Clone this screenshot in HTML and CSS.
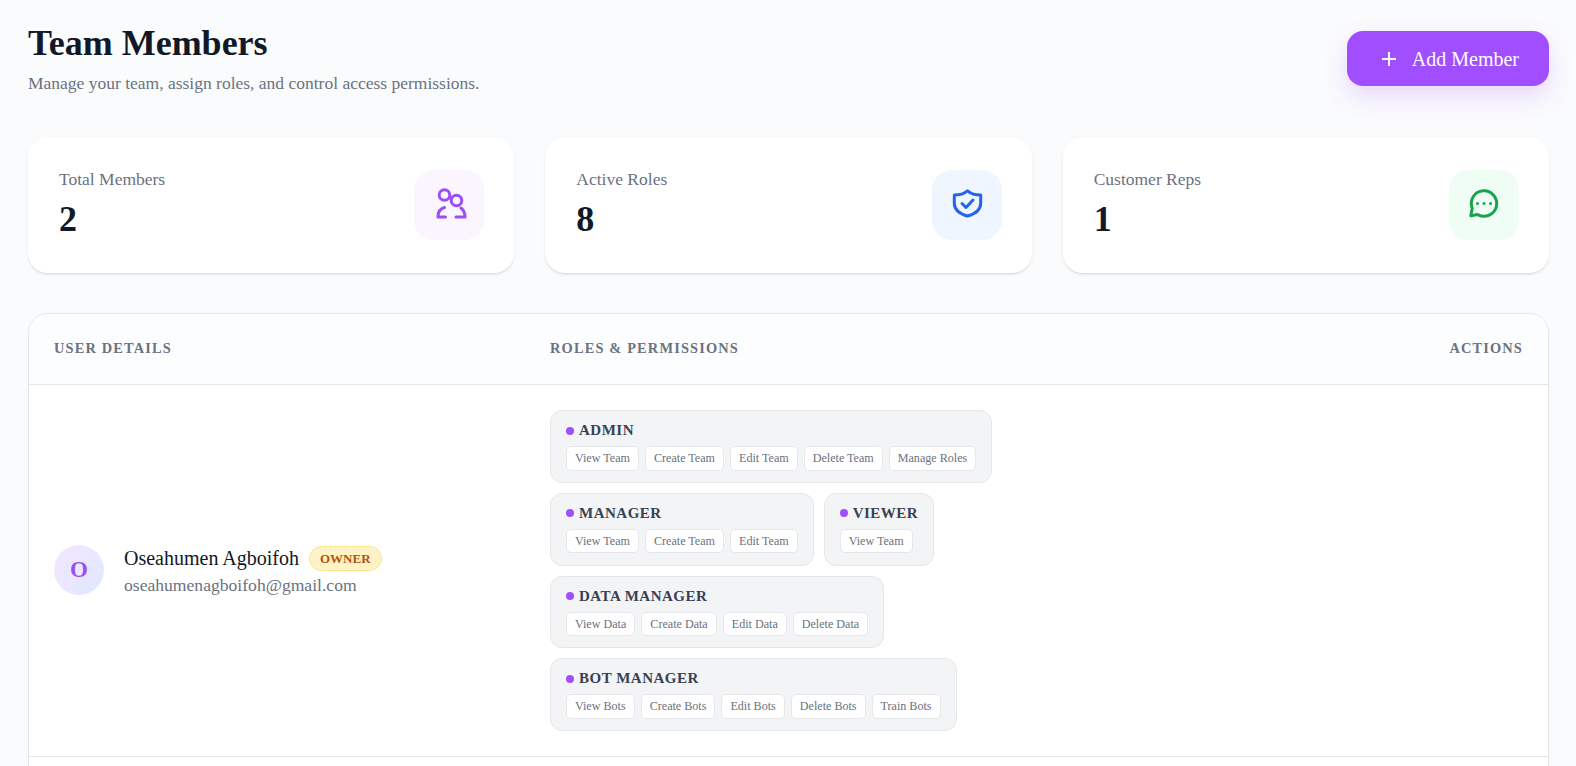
FILE: index.html
```html
<!DOCTYPE html>
<html lang="en">
<head>
<meta charset="utf-8">
<title>Team Members</title>
<link rel="stylesheet" href="styles.css">
</head>
<body>
<main class="page">
  <header class="page-head">
    <div>
      <h1 class="title">Team Members</h1>
      <p class="subtitle">Manage your team, assign roles, and control access permissions.</p>
    </div>
    <button class="add-btn" type="button">
      <svg class="add-icon" viewBox="0 0 16 16" aria-hidden="true"><path d="M8 1v14M1 8h14"/></svg>
      <span class="add-label">Add Member</span>
    </button>
  </header>

  <section class="stats">
    <article class="stat">
      <div class="stat-text">
        <div class="stat-label">Total Members</div>
        <div class="stat-value">2</div>
      </div>
      <div class="stat-icon stat-icon-purple">
        <svg class="glyph" viewBox="0 0 32 32" aria-hidden="true">
          <circle cx="11.500" cy="6" r="5.300"/>
          <circle cx="23.500" cy="11.500" r="5.300"/>
          <path d="M12.500 28H5C5 23 7.500 19.500 11.500 18.500"/>
          <path d="M23 28h9C32 24 30.500 21 28 19"/>
        </svg>
      </div>
    </article>
    <article class="stat">
      <div class="stat-text">
        <div class="stat-label">Active Roles</div>
        <div class="stat-value">8</div>
      </div>
      <div class="stat-icon stat-icon-blue">
        <svg class="glyph" viewBox="0 1 32 32" aria-hidden="true">
          <path d="M16.500 2.800C19.500 5.300 24 7 29.700 7v8c0 6.500-5.700 11-13.200 13C9 26 3.300 21.500 3.300 15V7C9 7 13.500 5.300 16.500 2.800Z"/>
          <path d="M11 15.500l4 4 7-7.500"/>
        </svg>
      </div>
    </article>
    <article class="stat">
      <div class="stat-text">
        <div class="stat-label">Customer Reps</div>
        <div class="stat-value">1</div>
      </div>
      <div class="stat-icon stat-icon-green">
        <svg class="glyph" viewBox="1 1 32 32" aria-hidden="true">
          <path d="M3.800 27.700L5.200 20.200A12.700 12.700 0 1 1 10.800 26.600Z"/>
          <path class="dots" d="M10.500 15.500h.01M17 15.500h.01M23.500 15.500h.01"/>
        </svg>
      </div>
    </article>
  </section>

  <section class="table">
    <div class="table-head">
      <div>User Details</div>
      <div>Roles &amp; Permissions</div>
      <div>Actions</div>
    </div>
    <div class="table-row">
      <div class="user">
        <div class="avatar">O</div>
        <div>
          <div class="user-line">
            <span class="user-name">Oseahumen Agboifoh</span>
            <span class="owner">Owner</span>
          </div>
          <div class="user-email">oseahumenagboifoh@gmail.com</div>
        </div>
      </div>
      <div class="roles">
        <div class="role">
          <div class="role-name">Admin</div>
          <div class="perms">
            <span class="perm">View Team</span><span class="perm">Create Team</span><span class="perm">Edit Team</span><span class="perm">Delete Team</span><span class="perm">Manage Roles</span>
          </div>
        </div>
        <div class="role">
          <div class="role-name">Manager</div>
          <div class="perms">
            <span class="perm">View Team</span><span class="perm">Create Team</span><span class="perm">Edit Team</span>
          </div>
        </div>
        <div class="role">
          <div class="role-name">Viewer</div>
          <div class="perms">
            <span class="perm">View Team</span>
          </div>
        </div>
        <div class="role">
          <div class="role-name">Data Manager</div>
          <div class="perms">
            <span class="perm">View Data</span><span class="perm">Create Data</span><span class="perm">Edit Data</span><span class="perm">Delete Data</span>
          </div>
        </div>
        <div class="role">
          <div class="role-name">Bot Manager</div>
          <div class="perms">
            <span class="perm">View Bots</span><span class="perm">Create Bots</span><span class="perm">Edit Bots</span><span class="perm">Delete Bots</span><span class="perm">Train Bots</span>
          </div>
        </div>
      </div>
      <div></div>
    </div>
    <div class="table-rest"></div>
  </section>
</main>
</body>
</html>
```

FILE: styles.css
```css
* { box-sizing: border-box; }
html, body { height: 100%; margin: 0; overflow: hidden; }
body {
  background: #fafbfd;
  font-family: "Liberation Serif", "Times New Roman", serif;
  color: #111827;
}
.page { padding: 22px 27px 0 28px; }

.page-head {
  display: flex;
  justify-content: space-between;
  align-items: flex-start;
  margin-bottom: 44px;
}
.title {
  margin: 0;
  font-size: 36px;
  line-height: 42px;
  font-weight: 700;
  color: #111827;
}
.subtitle {
  margin: 9px 0 0;
  font-size: 17.500px;
  line-height: 20px;
  color: #6b7280;
}
.add-btn {
  display: flex;
  align-items: center;
  gap: 15px;
  height: 55px;
  margin-top: 9px;
  padding: 0 30px 0 34px;
  border: 0;
  border-radius: 16px;
  background: #a04eff;
  color: #fff;
  font: 400 20px "Liberation Serif", "Times New Roman", serif;
  box-shadow: 0 10px 25px rgba(160, 78, 255, .2);
}
.add-label { padding-top: 2px; }
.add-icon {
  width: 16px;
  height: 16px;
  fill: none;
  stroke: #fff;
  stroke-width: 2;
}

.stats {
  display: grid;
  grid-template-columns: repeat(3, 1fr);
  gap: 31px;
  margin-bottom: 40px;
}
.stat {
  display: flex;
  justify-content: space-between;
  align-items: center;
  height: 136px;
  padding: 0 30px 0 31px;
  background: #fff;
  border-radius: 20px;
  box-shadow: 0 2px 3px -1px rgba(0, 0, 0, .16), 0 0 8px rgba(0, 0, 0, .02);
}
.stat-text { padding-bottom: 2px; }
.stat-label {
  font-size: 17.500px;
  line-height: 20px;
  color: #6b7280;
}
.stat-value {
  margin-top: 9px;
  font-size: 36px;
  line-height: 42px;
  font-weight: 700;
  color: #111827;
}
.stat-icon {
  display: flex;
  align-items: center;
  justify-content: center;
  width: 70px;
  height: 70px;
  border-radius: 20px;
}
.stat-icon-purple { background: #faf5ff; color: #9a4ff5; }
.stat-icon-blue { background: #eff6ff; color: #2563eb; }
.stat-icon-green { background: #f0fdf4; color: #16a34a; }
.glyph {
  width: 32px;
  height: 32px;
  overflow: visible;
  fill: none;
  stroke: currentColor;
  stroke-width: 3;
  stroke-linecap: round;
  stroke-linejoin: round;
}

.table {
  background: #fff;
  border: 1px solid #e5e7eb;
  border-radius: 20px;
  overflow: hidden;
  box-shadow: 0 1px 3px rgba(0, 0, 0, .04);
}
.table-head, .table-row {
  display: grid;
  grid-template-columns: 496px 1fr 100px;
  padding: 0 25px;
}
.table-head {
  align-items: center;
  height: 71px;
  padding-bottom: 2px;
  background: #fcfdfe;
  border-bottom: 1px solid #e5e7eb;
  font-size: 14.400px;
  font-weight: 700;
  letter-spacing: 1.150px;
  text-transform: uppercase;
  color: #6b7280;
}
.table-head > :last-child { text-align: right; }
.table-row {
  align-items: center;
  padding-top: 25px;
  padding-bottom: 25px;
  border-bottom: 1px solid #e5e7eb;
}
.table-rest { height: 40px; }

.user { display: flex; align-items: center; gap: 20px; }
.avatar {
  display: flex;
  align-items: center;
  justify-content: center;
  width: 50px;
  height: 50px;
  margin-top: -2px;
  border-radius: 50%;
  background: linear-gradient(135deg, #f3e8ff, #e0e7ff);
  color: #9a4ff5;
  font-size: 23px;
  font-weight: 700;
}
.user-line { display: flex; align-items: center; gap: 10px; }
.user-name { font-size: 20px; color: #111827; }
.owner {
  padding: 0 10px;
  height: 25px;
  line-height: 23px;
  border: 1px solid #fde68a;
  border-radius: 13px;
  background: #fef3c7;
  color: #b45309;
  font-size: 13px;
  font-weight: 700;
  text-transform: uppercase;
}
.user-email { margin-top: 4.500px; font-size: 17.600px; line-height: 20px; color: #6b7280; }

.roles {
  display: flex;
  flex-wrap: wrap;
  gap: 10px;
  max-width: 700px;
}
.role {
  padding: 11px 15px 11.300px;
  background: #f3f4f6;
  border: 1px solid #e5e7eb;
  border-radius: 12px;
}
.role-name {
  display: flex;
  align-items: center;
  gap: 5px;
  height: 17px;
  margin-bottom: 7px;
  font-size: 15px;
  font-weight: 700;
  letter-spacing: .5px;
  text-transform: uppercase;
  color: #374151;
}
.role-name::before {
  content: "";
  width: 8px;
  height: 8px;
  border-radius: 50%;
  background: #a04eff;
}
.perms { display: flex; gap: 6px; }
.perm {
  padding: 4px 8px;
  background: #fff;
  border: 1px solid #e5e7eb;
  border-radius: 5px;
  font-size: 12.100px;
  line-height: 14.500px;
  color: #6b7280;
  white-space: nowrap;
}
```
